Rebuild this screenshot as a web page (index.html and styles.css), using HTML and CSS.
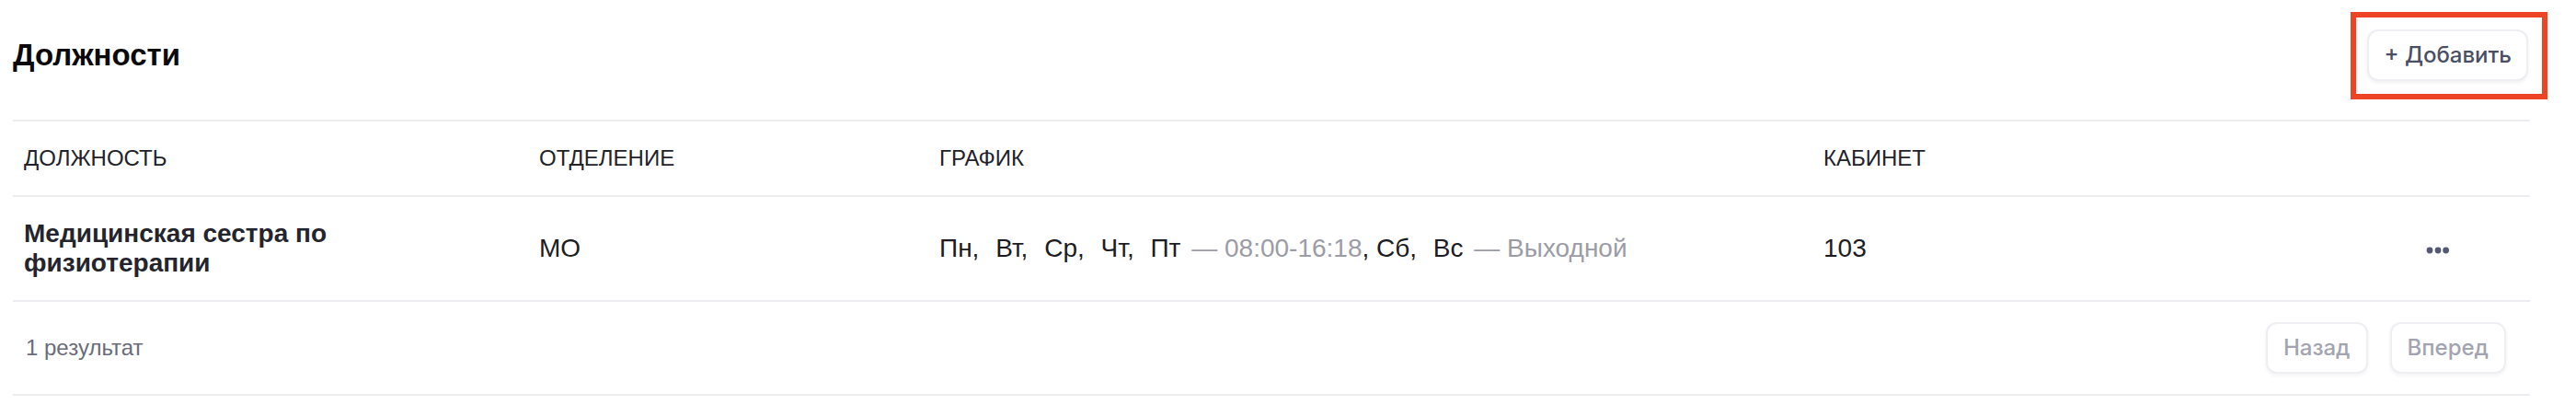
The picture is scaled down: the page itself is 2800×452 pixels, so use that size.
FILE: index.html
```html
<!DOCTYPE html>
<html lang="ru">
<head>
<meta charset="utf-8">
<title>Должности</title>
<link rel="stylesheet" href="styles.css">
</head>
<body>
<div class="page">
  <div class="top">
    <h1 class="title">Должности</h1>
    <div class="add-wrap">
      <button class="btn btn-add">+ Добавить</button>
      <span class="highlight"></span>
    </div>
  </div>
  <table class="table">
    <colgroup>
      <col class="c-pos">
      <col class="c-dep">
      <col class="c-sched">
      <col class="c-room">
      <col class="c-act">
    </colgroup>
    <thead>
      <tr>
        <th>Должность</th>
        <th>Отделение</th>
        <th>График</th>
        <th>Кабинет</th>
        <th></th>
      </tr>
    </thead>
    <tbody>
      <tr>
        <td><span class="pos-name">Медицинская сестра по физиотерапии</span></td>
        <td>МО</td>
        <td class="sched"><span class="day">Пн,</span> <span class="day">Вт,</span> <span class="day">Ср,</span> <span class="day">Чт,</span> Пт <span class="muted">— 08:00-16:18</span>, <span class="day">Сб,</span> Вс <span class="muted">— Выходной</span></td>
        <td>103</td>
        <td class="act">
          <svg class="dots" width="28" height="8" viewBox="0 0 28 8"><circle cx="5" cy="4" r="3.4"/><circle cx="14" cy="4" r="3.4"/><circle cx="22.6" cy="4" r="3.4"/></svg>
        </td>
      </tr>
    </tbody>
  </table>
  <div class="footer">
    <span class="count">1 результат</span>
    <div class="pager">
      <button class="btn btn-page">Назад</button>
      <button class="btn btn-page">Вперед</button>
    </div>
  </div>
</div>
</body>
</html>
```
FILE: styles.css
```css
* { box-sizing: border-box; }
body {
  margin: 0;
  background: #ffffff;
  font-family: "Liberation Sans", Arial, sans-serif;
  color: #1c1c22;
}
.page {
  padding: 0 50px 0 14px;
}
.top {
  display: flex;
  justify-content: space-between;
  align-items: center;
  padding: 32px 2px 42px 0;
}
.title {
  margin: 0;
  font-size: 33px;
  line-height: 48px;
  font-weight: 700;
  color: #0a0a0a;
}
.add-wrap {
  position: relative;
  display: flex;
}
.btn {
  font-family: Inter, "Liberation Sans", sans-serif;
  font-size: 24px;
  line-height: 32px;
  font-weight: 500;
  padding: 10px 17px;
  background: #ffffff;
  border: 2px solid #eeeef3;
  border-radius: 12px;
  box-shadow: 0 2px 4px rgba(20, 20, 40, 0.06);
}
.btn-add {
  color: #4b4f63;
  padding: 10px 16px;
}
.highlight {
  position: absolute;
  left: -18px;
  top: -19px;
  right: -21px;
  bottom: -20px;
  border: 6px solid #ee4426;
  pointer-events: none;
}
.table {
  width: 100%;
  table-layout: fixed;
  border-collapse: separate;
  border-spacing: 0;
}
.c-pos { width: 560px; }
.c-dep { width: 435px; }
.c-sched { width: 961px; }
.c-room { width: 580px; }
.c-act { width: 200px; }
.table th {
  text-align: left;
  font-weight: 400;
  font-size: 24px;
  line-height: 32px;
  text-transform: uppercase;
  color: #22222a;
  padding: 24px 12px;
  border-top: 2px solid #ececf1;
  border-bottom: 2px solid #ececf1;
}
.table td {
  font-size: 28px;
  line-height: 32px;
  color: #1c1c22;
  padding: 24px 12px;
  vertical-align: middle;
  border-bottom: 2px solid #ececf1;
}
.pos-name {
  display: block;
  max-width: 420px;
  font-weight: 700;
  color: #24242c;
}
.sched { white-space: nowrap; }
.day { margin-right: 10px; }
.muted { color: #9b9ca6; margin-left: 4px; }
.act { text-align: center; }
.dots { display: inline-block; vertical-align: middle; fill: #545870; }
.footer {
  display: flex;
  justify-content: space-between;
  align-items: center;
  padding: 22px 26px 22px 14px;
  border-bottom: 2px solid #ececf1;
}
.count {
  font-size: 24px;
  line-height: 32px;
  color: #6a6c7a;
}
.pager {
  display: flex;
  gap: 24px;
}
.btn-page {
  color: #a2a4b0;
}
```
